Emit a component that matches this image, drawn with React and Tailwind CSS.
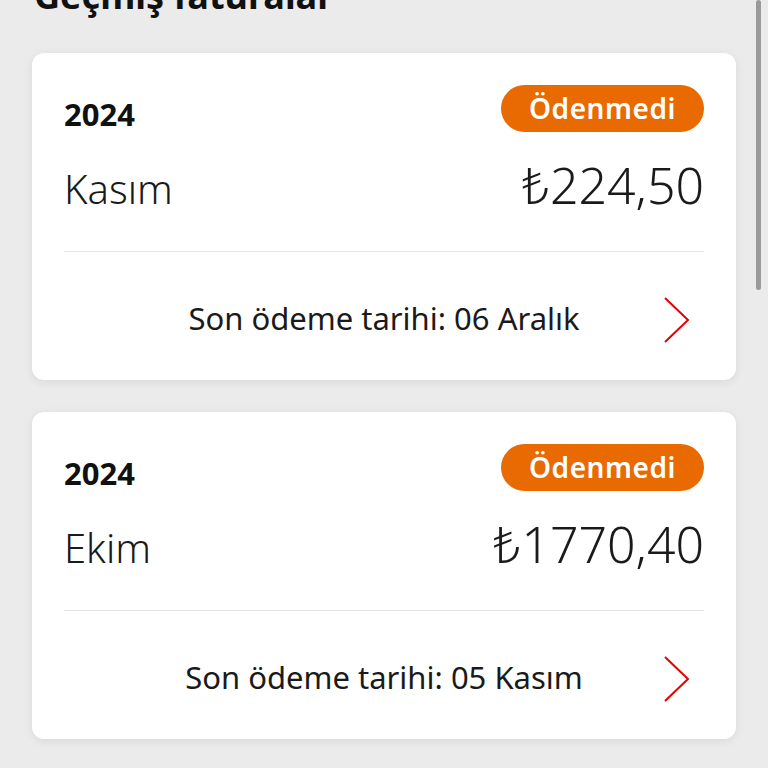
import React from "react";

const BILLS = [
  { year: "2024", month: "Kasım", amount: "₺224,50", due: "Son ödeme tarihi: 06 Aralık" },
  { year: "2024", month: "Ekim", amount: "₺1770,40", due: "Son ödeme tarihi: 05 Kasım" },
];

function Chevron() {
  return (
    <svg width="26" height="46" viewBox="0 0 26 46" fill="none">
      <polyline points="1,1 24,23 1,45" stroke="#e60000" strokeWidth="2" strokeLinejoin="miter" />
    </svg>
  );
}

function BillCard({ year, month, amount, due }) {
  return (
    <div className="bg-white rounded-xl shadow-[0_2px_10px_rgba(0,0,0,0.08)] px-8 pt-8 pb-[37px]">
      {/* year + status */}
      <div className="flex items-start justify-between">
        <p className="mt-[9px] text-[31px] leading-[40px] font-bold text-[#111]">{year}</p>
        <span className="h-[47px] px-[28px] rounded-full bg-[#e86a00] text-white text-[28px] leading-[47px] font-semibold tracking-[0.02em]">
          Ödenmedi
        </span>
      </div>

      {/* month + amount */}
      <div className="mt-[21px] flex items-baseline justify-between">
        <p className="text-[40px] leading-[60px] font-light text-[#1a1a1a]">{month}</p>
        <p className="text-[50px] leading-[60px] font-light text-[#1a1a1a]">{amount}</p>
      </div>

      <div className="mt-[32px] h-px bg-[#e6e6e6]" />

      {/* due date */}
      <div className="mt-[45px] grid grid-cols-[1fr_auto_1fr] items-center">
        <span />
        <p className="-mt-[4px] text-[31px] leading-[46px] text-[#1a1a1a]">{due}</p>
        <div className="flex justify-end pr-[14px]">
          <Chevron />
        </div>
      </div>
    </div>
  );
}

export default function App() {
  return (
    <div
      className="relative min-h-screen overflow-hidden bg-[#ebebeb]"
      style={{ fontFamily: '"Noto Sans", "Open Sans", sans-serif' }}
    >
      <div className="px-8 flex flex-col">
        <h1 className="-mt-[26px] mb-[35px] pl-[2px] text-[36px] leading-[44px] font-bold text-[#111]">
          Geçmiş faturalar
        </h1>
        <div className="flex flex-col gap-8 pb-8">
          {BILLS.map((b) => (
            <BillCard key={b.month} {...b} />
          ))}
        </div>
      </div>

      {/* overlay scrollbar */}
      <div className="absolute top-0 right-[7px] w-[5px] h-[290px] rounded-full bg-[#9a9a9a]" />
    </div>
  );
}
